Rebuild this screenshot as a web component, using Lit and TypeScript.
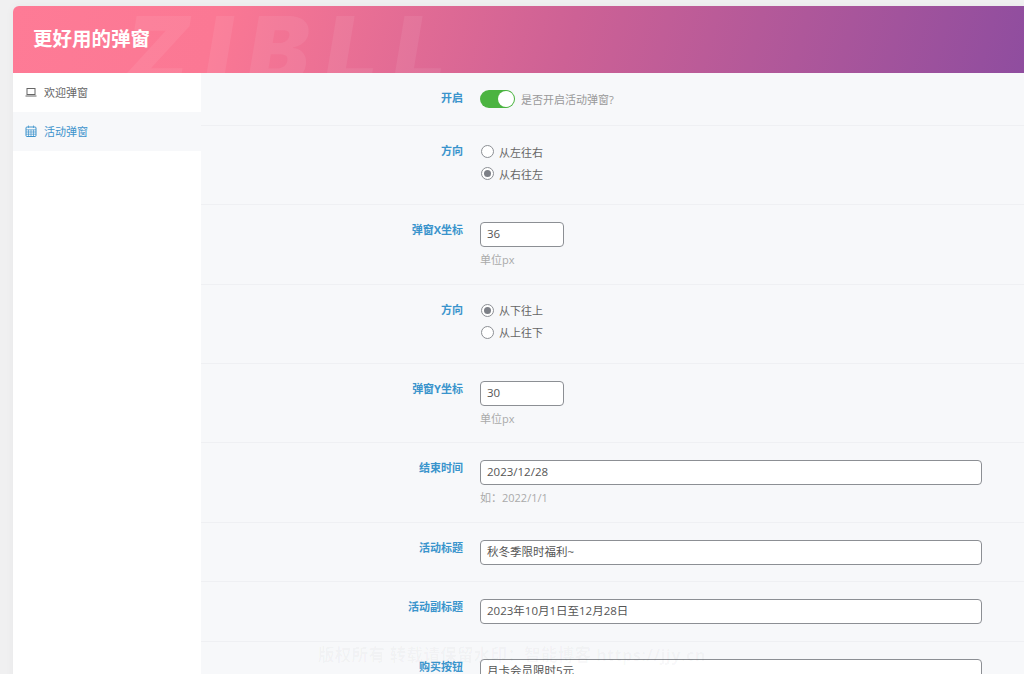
import { LitElement, html, css } from "lit";
import { customElement } from "lit/decorators.js";

type Row =
  | { kind: "switch"; label: string; hint: string }
  | { kind: "radio"; label: string; options: [string, boolean][] }
  | { kind: "input"; label: string; value: string; short?: boolean; desc?: string };

const rows: Row[] = [
  { kind: "switch", label: "开启", hint: "是否开启活动弹窗?" },
  { kind: "radio", label: "方向", options: [["从左往右", false], ["从右往左", true]] },
  { kind: "input", label: "弹窗X坐标", value: "36", short: true, desc: "单位px" },
  { kind: "radio", label: "方向", options: [["从下往上", true], ["从上往下", false]] },
  { kind: "input", label: "弹窗Y坐标", value: "30", short: true, desc: "单位px" },
  { kind: "input", label: "结束时间", value: "2023/12/28", desc: "如：2022/1/1" },
  { kind: "input", label: "活动标题", value: "秋冬季限时福利~" },
  { kind: "input", label: "活动副标题", value: "2023年10月1日至12月28日" },
  { kind: "input", label: "购买按钮", value: "月卡会员限时5元" },
];

@customElement("app-root")
export class AppRoot extends LitElement {
  static styles = css`
    :host {
      display: block;
      height: 674px;
      overflow: hidden;
      background: #f0f0f1;
      font-family: "Open Sans", "Noto Sans CJK SC", sans-serif;
      font-size: 11.5px;
      position: relative;
    }
    .page { padding: 6px 0 0 13px; width: 1011px; }
    .card {
      border-radius: 6px 0 0 0;
      overflow: hidden;
      box-shadow: 0 0 10px rgba(0, 0, 0, 0.04);
    }
    .head {
      height: 67px;
      box-sizing: border-box;
      padding: 20px 0 0 20px;
      position: relative;
      overflow: hidden;
      background: linear-gradient(105deg, #fe7b96 0%, #fb7894 20%, #cd6195 55%, #8f4d9f 100%);
      color: #fff;
      font-size: 19.5px;
      font-weight: 700;
      line-height: 26px;
    }
    .mark {
      position: absolute;
      left: 112px;
      top: -6px;
      font-family: "Inter", sans-serif;
      font-size: 92px;
      line-height: 100px;
      font-style: italic;
      font-weight: 900;
      letter-spacing: 16px;
      color: rgba(255, 255, 255, 0.07);
    }
    .title { position: relative; }
    .body { display: flex; background: #f7f8fa; min-height: 601px; }
    .side { width: 188px; flex: none; background: #fff; }
    .nav {
      height: 39px;
      display: flex;
      align-items: center;
      gap: 7px;
      padding: 0 0 2px 12px;
      box-sizing: border-box;
      color: #666;
      font-size: 11px;
    }
    .nav svg { width: 12px; height: 12px; flex: none; }
    .nav.on { background: #f7f8fa; color: #3d93cc; }
    .main { flex: 1; min-width: 0; }
    .row {
      display: grid;
      grid-template-columns: 262px 502px;
      column-gap: 17px;
      box-sizing: border-box;
      border-bottom: 1px solid #eff0f3;
      padding-top: 17px;
    }
    .h-switch { height: 53px; }
    .h-radio { height: 79px; }
    .h-desc { height: 79.5px; }
    .h-plain { height: 59.5px; }
    .label {
      text-align: right;
      color: #3a94cc;
      font-size: 11px;
      font-weight: 700;
      line-height: 14px;
      padding-top: 1px;
    }
    .switch-row { display: flex; align-items: center; gap: 6px; height: 18px; }
    .toggle {
      width: 35px;
      height: 18px;
      border-radius: 9px;
      background: #4bb440;
      position: relative;
    }
    .toggle i {
      position: absolute;
      right: 1px;
      top: 1px;
      width: 16px;
      height: 16px;
      border-radius: 50%;
      background: #fff;
    }
    .hint { color: #999; font-size: 11px; }
    .radios { display: flex; flex-direction: column; gap: 5px; }
    .radio { display: flex; align-items: center; gap: 5px; height: 17px; color: #666; font-size: 11px; }
    .dot {
      width: 13px;
      height: 13px;
      margin-left: 1px;
      box-sizing: border-box;
      border: 1px solid #8c8f94;
      border-radius: 50%;
      background: #fff;
      display: flex;
      align-items: center;
      justify-content: center;
    }
    .dot i { width: 7px; height: 7px; border-radius: 50%; background: #7d8087; }
    .input {
      box-sizing: border-box;
      height: 25px;
      width: 502px;
      border: 1px solid #8c8f94;
      border-radius: 4px;
      background: #fff;
      color: #555;
      padding: 0 6px;
      line-height: 22px;
      font-size: 11.5px;
    }
    .input.short { width: 84px; }
    .desc { color: #aaa; font-size: 11px; line-height: 15px; margin-top: 5px; }
    .foot {
      position: absolute;
      left: 318px;
      top: 645px;
      font-size: 16.5px;
      line-height: 20px;
      font-weight: 700;
      letter-spacing: 0.3px;
      color: rgba(60, 60, 70, 0.035);
      white-space: nowrap;
    }
  `;

  private field(r: Row) {
    if (r.kind === "switch") {
      return html`<div class="switch-row"><div class="toggle"><i></i></div><span class="hint">${r.hint}</span></div>`;
    }
    if (r.kind === "radio") {
      return html`<div class="radios">
        ${r.options.map(
          ([t, on]) => html`<div class="radio"><span class="dot">${on ? html`<i></i>` : ""}</span>${t}</div>`
        )}
      </div>`;
    }
    return html`<div class="input ${r.short ? "short" : ""}">${r.value}</div>
      ${r.desc ? html`<div class="desc">${r.desc}</div>` : ""}`;
  }

  private cls(r: Row) {
    if (r.kind === "switch") return "h-switch";
    if (r.kind === "radio") return "h-radio";
    return r.desc ? "h-desc" : "h-plain";
  }

  render() {
    return html`<div class="page">
        <div class="card">
          <div class="head"><span class="mark">ZIBLL</span><span class="title">更好用的弹窗</span></div>
          <div class="body">
            <div class="side">
              <div class="nav">
                <svg viewBox="0 0 12 12" fill="none" stroke="currentColor" stroke-width="1">
                  <rect x="2" y="2.5" width="8" height="6" />
                  <path d="M0.5 10h11" stroke-width="1.2" />
                </svg>
                欢迎弹窗
              </div>
              <div class="nav on">
                <svg viewBox="0 0 12 12" fill="none" stroke="currentColor" stroke-width="1">
                  <rect x="1" y="2" width="10" height="9.5" rx="1" />
                  <path d="M1 4.8h10M1 7h10M1 9.2h10M3.5 4.8v6.7M6 4.8v6.7M8.5 4.8v6.7M3.5 .5v2.5M8.5 .5v2.5" stroke-width=".7" />
                </svg>
                活动弹窗
              </div>
            </div>
            <div class="main">
              ${rows.map(
                (r) => html`<div class="row ${this.cls(r)}">
                  <div class="label">${r.label}</div>
                  <div>${this.field(r)}</div>
                </div>`
              )}
            </div>
          </div>
        </div>
      </div>
      <div class="foot">版权所有 转载请保留水印：智能博客 https://jjy.cn</div>`;
  }
}
